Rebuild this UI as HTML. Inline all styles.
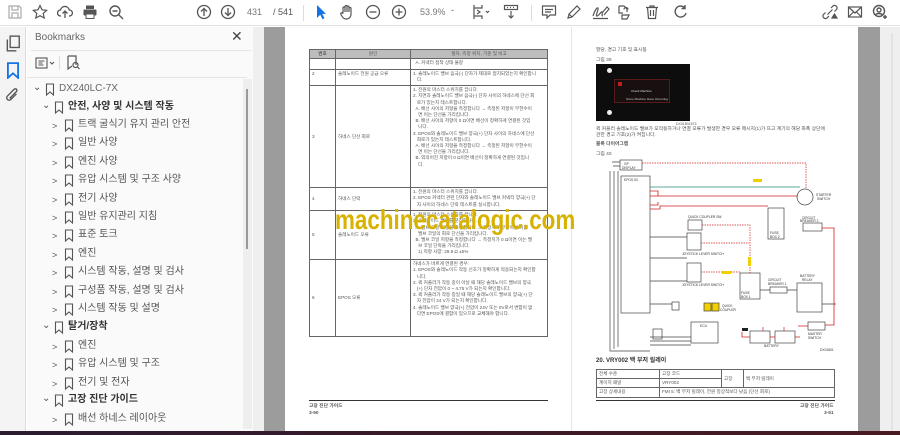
<!DOCTYPE html>
<html><head><meta charset="utf-8">
<style>
*{margin:0;padding:0;box-sizing:border-box}
body{width:900px;height:435px;overflow:hidden;background:#fff;font-family:"Liberation Sans","Noto Sans CJK KR",sans-serif;position:relative}
.a{position:absolute}
.tb{left:0;top:0;width:900px;height:26px;background:#fff;border-bottom:1px solid #e2e2e2}
.ic{position:absolute;top:4px}
.rail{left:0;top:27px;width:26px;height:405px;background:#f4f4f4;border-right:1px solid #ddd}
.panel{left:27px;top:27px;width:226px;height:405px;background:#fafafa}
.bm{position:absolute;font-size:10px;color:#555;white-space:nowrap;height:14px;line-height:14px}
.bm b{font-weight:bold;color:#333}
.chev{position:absolute;font-size:9px;color:#555}
.k{font-size:4.8px;color:#555;line-height:6.2px;white-space:nowrap;position:absolute}
table.t{position:absolute;border-collapse:collapse;font-size:4.6px;color:#555}
table.t td{border:0.8px solid #666;vertical-align:top;padding:1px 2px;line-height:6.2px}
</style></head><body>
<div class="a tb">
<svg class="ic" style="left:7px" width="16" height="16" viewBox="0 0 16 16" fill="none" stroke="#aaa" stroke-width="1.2"><path d="M2 2h10l2 2v10H2z"/><path d="M5 2v4h6V2M5 14v-5h6v5"/></svg>
<svg class="ic" style="left:32px" width="16" height="16" viewBox="0 0 16 16" fill="none" stroke="#555" stroke-width="1.2"><path d="M8 1.5l2 4.3 4.6.5-3.4 3.1 1 4.6L8 11.7 3.8 14l1-4.6L1.4 6.3 6 5.8z"/></svg>
<svg class="ic" style="left:57px" width="16" height="16" viewBox="0 0 16 16" fill="none" stroke="#555" stroke-width="1.3"><path d="M4 12H3.5a3 3 0 010-6 4.5 4.5 0 018.8 0 3 3 0 01.2 6H12M8 14V7M5.5 9.5L8 7l2.5 2.5"/></svg>
<svg class="ic" style="left:82px" width="16" height="16" viewBox="0 0 16 16" fill="#555"><rect x="4" y="1.5" width="8" height="3.5"/><rect x="1.5" y="5.5" width="13" height="6" rx="1"/><rect x="4" y="10" width="8" height="4.5" fill="#fff" stroke="#555"/></svg>
<svg class="ic" style="left:108px" width="16" height="16" viewBox="0 0 16 16" fill="none" stroke="#555" stroke-width="1.4"><circle cx="7" cy="7" r="5"/><path d="M10.5 10.5L15 15M4.5 7h5"/></svg>
<svg class="ic" style="left:196px" width="16" height="16" viewBox="0 0 16 16" fill="none" stroke="#555" stroke-width="1.3"><circle cx="8" cy="8" r="6.5"/><path d="M8 12V4.5M5 7.5l3-3 3 3"/></svg>
<svg class="ic" style="left:220px" width="16" height="16" viewBox="0 0 16 16" fill="none" stroke="#555" stroke-width="1.3"><circle cx="8" cy="8" r="6.5"/><path d="M8 4v7.5M5 8.5l3 3 3-3"/></svg>
<div class="a" style="left:247px;top:7px;font-size:9px;color:#777">431</div>
<div class="a" style="left:273px;top:7px;font-size:9px;color:#555">/ 541</div>
<div class="a" style="left:303px;top:5px;width:1px;height:16px;background:#ddd"></div>
<svg class="ic" style="left:314px" width="14" height="16" viewBox="0 0 14 16"><path d="M3 1v13l3.2-3.2 2.3 4.5 2-1-2.3-4.4H12z" fill="#1473e6"/></svg>
<svg class="ic" style="left:339px" width="16" height="16" viewBox="0 0 16 16" fill="none" stroke="#555" stroke-width="1.2"><path d="M4 9V4a1 1 0 012 0v4V2.5a1 1 0 012 0V8V3a1 1 0 012 0v5V4.5a1 1 0 012 0V10c0 3-2 5-4.5 5S4 14 2.5 11.5L1.8 10a1 1 0 011.8-.8z"/></svg>
<svg class="ic" style="left:365px" width="16" height="16" viewBox="0 0 16 16" fill="none" stroke="#555" stroke-width="1.3"><circle cx="8" cy="8" r="6.5"/><path d="M4.5 8h7"/></svg>
<svg class="ic" style="left:391px" width="16" height="16" viewBox="0 0 16 16" fill="none" stroke="#555" stroke-width="1.3"><circle cx="8" cy="8" r="6.5"/><path d="M4.5 8h7M8 4.5v7"/></svg>
<div class="a" style="left:420px;top:7px;font-size:9px;color:#777">53.9%</div>
<div class="a" style="left:451px;top:5px;font-size:9px;color:#555">-</div>
<svg class="ic" style="left:472px" width="18" height="16" viewBox="0 0 18 16" fill="none" stroke="#555" stroke-width="1.2"><path d="M2 1v14M2 4h8V1M2 12h8v3M5 6l3 2-3 2M14 7l1.5 1.5L17 7"/></svg>
<svg class="ic" style="left:503px" width="16" height="16" viewBox="0 0 16 16" fill="none" stroke="#555" stroke-width="1.2"><rect x="1.5" y="1.5" width="13" height="4"/><path d="M4 3.5h1M7 3.5h1M10 3.5h1M8 7v7M5.5 11.5L8 14l2.5-2.5"/></svg>
<div class="a" style="left:531px;top:5px;width:1px;height:16px;background:#ddd"></div>
<svg class="ic" style="left:541px" width="16" height="16" viewBox="0 0 16 16" fill="none" stroke="#555" stroke-width="1.2"><path d="M1.5 2h13v9H9l-3 3v-3H1.5z"/><path d="M4 5.5h8M4 8h6"/></svg>
<svg class="ic" style="left:566px" width="16" height="16" viewBox="0 0 16 16" fill="none" stroke="#555" stroke-width="1.2"><path d="M2 14l1-4 8-8 3 3-8 8zM3 10l3 3"/></svg>
<svg class="ic" style="left:592px" width="18" height="16" viewBox="0 0 18 16" fill="none" stroke="#555" stroke-width="1.2"><path d="M1 12c2-6 4-9 5-8s-3 8-1 8 4-5 5-4-1 4 1 4M1 14.5h15M10 9l5-6 2 2-5 6"/></svg>
<svg class="ic" style="left:615px" width="16" height="16" viewBox="0 0 16 16" fill="none" stroke="#555" stroke-width="1.2"><path d="M4 2h5l3 3v3M4 2v7h4M7 11h7l-2 4H7zM9 5.5a2 2 0 014 0"/></svg>
<svg class="ic" style="left:644px" width="16" height="16" viewBox="0 0 16 16" fill="none" stroke="#555" stroke-width="1.2"><path d="M2 3.5h12M6 3.5V2h4v1.5M3.5 3.5l1 11h7l1-11M6.5 6v6M9.5 6v6"/></svg>
<svg class="ic" style="left:673px" width="16" height="16" viewBox="0 0 16 16" fill="none" stroke="#555" stroke-width="1.4"><path d="M13 9a5.5 5.5 0 11-1.6-5.5M12 1v3.5H8.5"/></svg>
<svg class="ic" style="left:822px" width="16" height="16" viewBox="0 0 16 16" fill="none" stroke="#555" stroke-width="1.2"><path d="M9 4l2-2a2.5 2.5 0 013.5 3.5l-2 2M7 12l-2 2A2.5 2.5 0 011.5 10.5l2-2M5.5 10.5l5-5"/><path d="M10 14l2.5-4 2.5 4z" fill="#555"/></svg>
<svg class="ic" style="left:847px" width="16" height="16" viewBox="0 0 16 16" fill="none" stroke="#555" stroke-width="1.2"><rect x="1.5" y="3" width="13" height="10"/><path d="M1.5 3L8 9l6.5-6M1.5 13l5-5M14.5 13l-5-5"/></svg>
<svg class="ic" style="left:872px" width="16" height="16" viewBox="0 0 16 16" fill="none" stroke="#555" stroke-width="1.4"><circle cx="7" cy="7" r="5.5"/><circle cx="7" cy="6" r="2"/><path d="M3.5 11c1-2 6-2 7 0M13 11v4M11 13h4"/></svg>
</div>
<div class="a rail">
<svg class="a" style="left:5px;top:8px" width="16" height="17" viewBox="0 0 14 15" fill="none" stroke="#555" stroke-width="1.2"><rect x="4.5" y="1" width="8" height="10"/><path d="M2 4v10h8"/></svg>
<svg class="a" style="left:6px;top:35px" width="14" height="17" viewBox="0 0 12 15" fill="none" stroke="#1473e6" stroke-width="1.6"><path d="M1.5 1h9v13L6 10l-4.5 4z"/></svg>
<svg class="a" style="left:4px;top:60px" width="17" height="17" viewBox="0 0 15 15" fill="none" stroke="#555" stroke-width="1.2"><path d="M11 6l-5 5a2 2 0 01-3-3l6-6a1.3 1.3 0 012 2l-6 6"/></svg>
</div>
<div class="a panel">
<div class="a" style="left:8px;top:5px;font-size:10px;color:#666">Bookmarks</div>
<div class="a" style="left:204px;top:1px;font-size:14px;color:#444">✕</div>
<div class="a" style="left:4px;top:23px;width:220px;height:1px;background:#e4e4e4"></div>
<svg class="a" style="left:8px;top:30px" width="22" height="12" viewBox="0 0 22 12" fill="none" stroke="#555" stroke-width="1.1"><rect x="1" y="1" width="11" height="10"/><path d="M3.5 4h6M3.5 6h4M3.5 8h5"/><path d="M15 5l2 2 2-2" /></svg>
<div class="a" style="left:32px;top:29px;width:1px;height:14px;background:#ddd"></div>
<svg class="a" style="left:39px;top:28px" width="14" height="15" viewBox="0 0 14 15" fill="none" stroke="#555" stroke-width="1.2"><path d="M2 1h8v9M2 1v13l4-3"/><circle cx="9.5" cy="10" r="2.5"/><path d="M11.5 12l2 2"/></svg>
<div class="a" style="left:0;top:50px;width:220px;height:1px;background:#e4e4e4"></div>
<div class="a" style="left:216px;top:52px;width:9px;height:350px;background:#eee"></div>
<div class="a" style="left:219px;top:62px;width:2px;height:160px;background:#999"></div>
</div>
<div class="a" style="left:253px;top:27px;width:11px;height:405px;background:#efefef"></div>
<div class="a" style="left:264px;top:27px;width:21px;height:405px;background:#9c9c9c"></div>
<div class="a" style="left:858px;top:27px;width:22px;height:405px;background:#9c9c9c"></div>
<div class="a" style="left:880px;top:27px;width:20px;height:405px;background:#efefef"></div>
<div class="a" style="left:891px;top:33px;width:2px;height:400px;background:#e3e3e3"></div>
<div class="a" style="left:571px;top:27px;width:1px;height:405px;background:#e6e6e6"></div>

<table class="t" style="left:309px;top:49px;width:239px">
<tr style="background:#bdbdbd;height:9px"><td style="width:26px;text-align:center;font-weight:bold">번호</td><td style="width:75px;text-align:center">원인</td><td style="text-align:center">절차, 측정 위치, 기준 및 비고</td></tr>
<tr style="height:11px"><td></td><td></td><td>&nbsp;&nbsp;A. 커넥터 접착 상태 불량</td></tr>
<tr style="height:16px"><td>2</td><td>솔레노이드 전원 공급 오류</td><td>1. 솔레노이드 밸브 음극(-) 단자가 제대로 접지되었는지 확인합니<br>&nbsp;&nbsp;&nbsp;다.</td></tr>
<tr style="height:102px"><td style="vertical-align:middle">3</td><td style="vertical-align:middle">하네스 단선 회로</td><td>1. 전원의 마스터 스위치를 끕니다.<br>2. 지면과 솔레노이드 밸브 음극(-) 단자 사이의 하네스에 단선 회<br>&nbsp;&nbsp;&nbsp;로가 있는지 테스트합니다.<br>&nbsp;&nbsp;A. 배선 사이의 저항을 측정합니다 → 측정된 저항이 무한수이<br>&nbsp;&nbsp;&nbsp;&nbsp;면 이는 단선을 가리킵니다.<br>&nbsp;&nbsp;B. 배선 사이의 저항이 0 Ω이면 배선이 정확하게 연결된 것입<br>&nbsp;&nbsp;&nbsp;&nbsp;니다.<br>3. EPOS와 솔레노이드 밸브 양극(+) 단자 사이의 하네스에 단선<br>&nbsp;&nbsp;&nbsp;회로가 있는지 테스트합니다.<br>&nbsp;&nbsp;A. 배선 사이의 저항을 측정합니다 → 측정된 저항이 무한수이<br>&nbsp;&nbsp;&nbsp;&nbsp;면 이는 단선을 가리킵니다.<br>&nbsp;&nbsp;B. 외의어진 저항이 0 Ω이면 배선이 정확하게 연결된 것입니<br>&nbsp;&nbsp;&nbsp;&nbsp;다.</td></tr>
<tr style="height:23px"><td style="vertical-align:middle">4</td><td style="vertical-align:middle">하네스 단락</td><td>1. 전원의 마스터 스위치를 끕니다.<br>2. EPOS 커넥터 관련 단자와 솔레노이드 밸브 커넥터 양극(+) 단<br>&nbsp;&nbsp;&nbsp;자 사이의 하네스 단락 테스트를 실시합니다.</td></tr>
<tr style="height:49px"><td style="vertical-align:middle">5</td><td style="vertical-align:middle">솔레노이드 오류</td><td>1. 전원의 마스터 스위치를 끕니다.<br>2. 솔레노이드 밸브를 분리합니다.<br>&nbsp;&nbsp;A. 밸브 코일 저항을 측정합니다 → 측정치가 무한이면 이는<br>&nbsp;&nbsp;&nbsp;&nbsp;밸브 코일의 회로 단선을 가리킵니다.<br>&nbsp;&nbsp;B. 밸브 코일 저항을 측정합니다 → 측정치가 0 Ω이면 이는 밸<br>&nbsp;&nbsp;&nbsp;&nbsp;브 코일 단락을 가리킵니다.<br>&nbsp;&nbsp;&nbsp;&nbsp;1) 저항 사양: 29.8 Ω ±5%</td></tr>
<tr style="height:77px"><td style="vertical-align:middle">6</td><td style="vertical-align:middle">EPOS 오류</td><td>하네스가 바르게 연결된 경우:<br>1. EPOS와 솔레노이드 작동 신호가 정확하게 적용되는지 확인합<br>&nbsp;&nbsp;&nbsp;니다.<br>2. 퀵 커플러가 작동 중이 아닐 때 해당 솔레노이드 밸브의 양극<br>&nbsp;&nbsp;&nbsp;(+) 단자 전압이 0 ~ 4.75 V가 되는지 확인합니다.<br>3. 퀵 커플러가 작동 중일 때 해당 솔레노이드 밸브의 양극(+) 단<br>&nbsp;&nbsp;&nbsp;자 전압이 24 V가 되는지 확인합니다.<br>4. 솔레노이드 밸브 양극(+) 전압이 24V 또는 0V로서 변함이 없<br>&nbsp;&nbsp;&nbsp;다면 EPOS에 결함이 있으므로 교체해야 합니다.</td></tr>
</table>
<div class="a" style="left:309px;top:400px;width:239px;height:1px;background:#333"></div>
<div class="k" style="left:309px;top:404px;font-weight:bold">고장 진단 가이드</div>
<div class="k" style="left:309px;top:411px;font-weight:bold">3-50</div>

<div class="a" style="left:335px;top:204px;font-size:28px;font-weight:bold;color:#d8b200;white-space:nowrap;transform:scaleX(0.8);transform-origin:0 0">machinecatalogic.com</div>

<div class="k" style="left:596px;top:48px">할당, 경고 기호 및 표시등</div>
<div class="k" style="left:596px;top:58px">그림 39</div>
<div class="a" style="left:596px;top:64px;width:94px;height:57px;background:#0d0d0d">
<div class="a" style="left:18px;top:15px;width:56px;height:24px;border:1px solid #5a1a1a;background:#181010"></div>
<div class="a" style="left:22px;top:18px;width:4px;height:4px;background:#c02020"></div>
<div class="a" style="left:35px;top:25px;font-size:3px;color:#ddd">Check Machine</div>
<div class="a" style="left:30px;top:33px;font-size:3px;color:#ccc">Some Machine Issue Occurring</div>
<div class="a" style="left:11px;top:4px;width:5px;height:5px;border-radius:50%;background:#eee"></div>
<div class="a" style="left:11px;top:46px;width:5px;height:5px;border-radius:50%;background:#eee"></div>
</div>
<div class="k" style="left:676px;top:121px;font-size:3.5px">DX01801873</div>
<div class="k" style="left:596px;top:127px">퀵 커플러 솔레노이드 밸브가 오작동하거나 연결 오류가 발생한 경우 오류 메시지(1)가 뜨고 계기의 해당 화폭 상단에</div>
<div class="k" style="left:596px;top:133px">관한 경고 기호(2)가 켜집니다.</div>
<div class="k" style="left:596px;top:142px;font-weight:bold">블록 다이어그램</div>
<div class="k" style="left:596px;top:152px">그림 40</div>
<svg class="a" style="left:590px;top:158px" width="255" height="195" viewBox="590 158 255 195" fill="none" stroke-width="0.7">
<g stroke="#444">
<rect x="620" y="160" width="22" height="10" fill="#fff"/>
<rect x="621" y="176" width="29" height="137" fill="#fff"/>
<circle cx="805" cy="197" r="8"/>
<rect x="768" y="208" width="16" height="31"/>
<rect x="803" y="223" width="19" height="8"/>
<rect x="688" y="220" width="14" height="10"/>
<rect x="687" y="233" width="14" height="17"/>
<rect x="687" y="263" width="14" height="19"/>
<rect x="740" y="273" width="20" height="26"/>
<rect x="770" y="287" width="17" height="6"/>
<rect x="797" y="283" width="25" height="29"/>
<rect x="691" y="322" width="27" height="21"/>
<rect x="750" y="331" width="20" height="12"/>
<rect x="775" y="331" width="20" height="12"/>
<rect x="808" y="322" width="17" height="8"/>
<rect x="672" y="302" width="7" height="8"/>
<rect x="653" y="329" width="9" height="10"/>
<path d="M610 171v180h40M614 171v178M618 171v176M612 162h8M613 166h7"/>
<path d="M650 341h41M650 345h41M650 337h41"/>
<path d="M650 237h37M650 258h37M650 281h37M650 304h22"/>
<path d="M836 304h-14M787 290h10M760 290h10"/>
</g>
<g stroke="#2a8a7a"><path d="M650 187h150"/></g>
<g stroke="#d02020" stroke-width="0.8"><path d="M650 191h8v5h140M650 196h8M650 205h8v-3M650 209h10v-3h108"/><path d="M822 228h12v97h-9M808 326h-10M795 337h5M770 337h5M750 337h-8v-5"/></g>
<g stroke="#d02020" stroke-dasharray="1.5 1"><path d="M642 163h164v26M702 225h48v48M701 243h48M701 272h39"/></g>
<rect x="753" y="179" width="9" height="3" fill="#f2d000"/>
<rect x="722" y="271" width="9" height="3" fill="#f2d000"/>
<rect x="748" y="257" width="3" height="9" fill="#f2d000"/>
<rect x="704" y="303" width="7" height="8" fill="#f2d000" stroke="#444"/>
<rect x="712" y="303" width="7" height="8" fill="#f2d000" stroke="#444"/>
<rect x="742" y="328" width="6" height="3" fill="#222"/>
<path d="M763 331v-4M784 331v-4" stroke="#d02020"/>
<g font-size="3.3" fill="#333" stroke="none" font-family="Liberation Sans"><text x="624" y="165">GP</text><text x="622" y="169">DISPLAY</text><text x="624" y="181">EPOS 53</text><text x="816" y="196">STARTER</text><text x="817" y="200">SWITCH</text><text x="802" y="219">CIRCUIT</text><text x="800" y="222">BREAKER 2</text><text x="770" y="234">FUSE</text><text x="770" y="238">BOX 2</text><text x="688" y="218">QUICK COUPLER SW</text><text x="682" y="255">JOYSTICK LEVER SWITCH</text><text x="682" y="286">JOYSTICK LEVER SWITCH</text><text x="741" y="294">FUSE</text><text x="741" y="298">BOX 1</text><text x="768" y="281">CIRCUIT</text><text x="768" y="285">BREAKER 1</text><text x="800" y="277">BATTERY</text><text x="802" y="281">RELAY</text><text x="722" y="307">QUICK</text><text x="720" y="311">COUPLER</text><text x="700" y="327">ECU</text><text x="764" y="347">BATTERY</text><text x="808" y="335">MASTER</text><text x="808" y="339">SWITCH</text><text x="820" y="351">DX01801</text></g>
</svg>
<div class="k" style="left:596px;top:358px;font-size:6px;font-weight:bold;color:#333">20. VRY002 백 부저 릴레이</div>
<table class="t" style="left:596px;top:369px;width:239px">
<tr style="height:9px"><td style="width:63px">전체 수준</td><td style="width:62px">고장 코드</td><td rowspan="2" style="width:22px;vertical-align:middle">고장</td><td rowspan="2" style="vertical-align:middle">백 부저 릴레이</td></tr>
<tr style="height:9px"><td>계이지 패널</td><td>VRY002</td></tr>
<tr style="height:9px"><td>고장 상세내용</td><td colspan="3">FMI 5: 백 부저 릴레이, 전원 정상적보다 낮음 (단선 회로)</td></tr>
</table>
<div class="a" style="left:596px;top:400px;width:239px;height:1px;background:#333"></div>
<div class="k" style="left:800px;top:404px;font-weight:bold">고장 진단 가이드</div>
<div class="k" style="left:824px;top:411px;font-weight:bold">3-51</div>

<div class="a" style="left:0;top:431px;width:900px;height:4px;background:linear-gradient(90deg,#2b1c30,#3a1a28 50%,#4a1a22)"></div>

<svg width="0" height="0" style="position:absolute"><defs><symbol id="bk" viewBox="0 0 10 13"><path d="M1.5 1h7v11L5 9l-3.5 3z" fill="none" stroke="#555" stroke-width="1.1"/></symbol></defs></svg>
<div class="bm" style="left:33px;top:81px">⌄</div><svg class="a" style="left:45px;top:83px" width="10" height="13"><use href="#bk"/></svg><div class="bm" style="left:59px;top:82px;color:#666">DX240LC-7X</div>
<div class="bm" style="left:42px;top:99px">⌄</div><svg class="a" style="left:54px;top:101px" width="10" height="13"><use href="#bk"/></svg><div class="bm" style="left:68px;top:100px"><b>안전, 사양 및 시스템 작동</b></div>
<div class="chev a" style="left:52px;top:121px">&gt;</div><svg class="a" style="left:64px;top:119px" width="10" height="13"><use href="#bk"/></svg><div class="bm" style="left:78px;top:118px">트랙 굴식기 유지 관리 안전</div>
<div class="chev a" style="left:52px;top:139px">&gt;</div><svg class="a" style="left:64px;top:137px" width="10" height="13"><use href="#bk"/></svg><div class="bm" style="left:78px;top:136px">일반 사양</div>
<div class="chev a" style="left:52px;top:158px">&gt;</div><svg class="a" style="left:64px;top:156px" width="10" height="13"><use href="#bk"/></svg><div class="bm" style="left:78px;top:155px">엔진 사양</div>
<div class="chev a" style="left:52px;top:176px">&gt;</div><svg class="a" style="left:64px;top:174px" width="10" height="13"><use href="#bk"/></svg><div class="bm" style="left:78px;top:173px">유압 시스템 및 구조 사양</div>
<div class="chev a" style="left:52px;top:195px">&gt;</div><svg class="a" style="left:64px;top:193px" width="10" height="13"><use href="#bk"/></svg><div class="bm" style="left:78px;top:192px">전기 사양</div>
<div class="chev a" style="left:52px;top:213px">&gt;</div><svg class="a" style="left:64px;top:211px" width="10" height="13"><use href="#bk"/></svg><div class="bm" style="left:78px;top:210px">일반 유지관리 지침</div>
<div class="chev a" style="left:52px;top:231px">&gt;</div><svg class="a" style="left:64px;top:229px" width="10" height="13"><use href="#bk"/></svg><div class="bm" style="left:78px;top:228px">표준 토크</div>
<div class="chev a" style="left:52px;top:250px">&gt;</div><svg class="a" style="left:64px;top:248px" width="10" height="13"><use href="#bk"/></svg><div class="bm" style="left:78px;top:247px">엔진</div>
<div class="chev a" style="left:52px;top:268px">&gt;</div><svg class="a" style="left:64px;top:266px" width="10" height="13"><use href="#bk"/></svg><div class="bm" style="left:78px;top:265px">시스템 작동, 설명 및 검사</div>
<div class="chev a" style="left:52px;top:287px">&gt;</div><svg class="a" style="left:64px;top:285px" width="10" height="13"><use href="#bk"/></svg><div class="bm" style="left:78px;top:284px">구성품 작동, 설명 및 검사</div>
<div class="chev a" style="left:52px;top:305px">&gt;</div><svg class="a" style="left:64px;top:303px" width="10" height="13"><use href="#bk"/></svg><div class="bm" style="left:78px;top:302px">시스템 작동 및 설명</div>
<div class="bm" style="left:42px;top:319px">⌄</div><svg class="a" style="left:54px;top:321px" width="10" height="13"><use href="#bk"/></svg><div class="bm" style="left:68px;top:320px"><b>탈거/장착</b></div>
<div class="chev a" style="left:52px;top:342px">&gt;</div><svg class="a" style="left:64px;top:340px" width="10" height="13"><use href="#bk"/></svg><div class="bm" style="left:78px;top:339px">엔진</div>
<div class="chev a" style="left:52px;top:360px">&gt;</div><svg class="a" style="left:64px;top:358px" width="10" height="13"><use href="#bk"/></svg><div class="bm" style="left:78px;top:357px">유압 시스템 및 구조</div>
<div class="chev a" style="left:52px;top:379px">&gt;</div><svg class="a" style="left:64px;top:377px" width="10" height="13"><use href="#bk"/></svg><div class="bm" style="left:78px;top:376px">전기 및 전자</div>
<div class="bm" style="left:42px;top:392px">⌄</div><svg class="a" style="left:54px;top:394px" width="10" height="13"><use href="#bk"/></svg><div class="bm" style="left:68px;top:393px"><b>고장 진단 가이드</b></div>
<div class="chev a" style="left:52px;top:415px">&gt;</div><svg class="a" style="left:64px;top:413px" width="10" height="13"><use href="#bk"/></svg><div class="bm" style="left:78px;top:412px">배선 하네스 레이아웃</div>
</body></html>
